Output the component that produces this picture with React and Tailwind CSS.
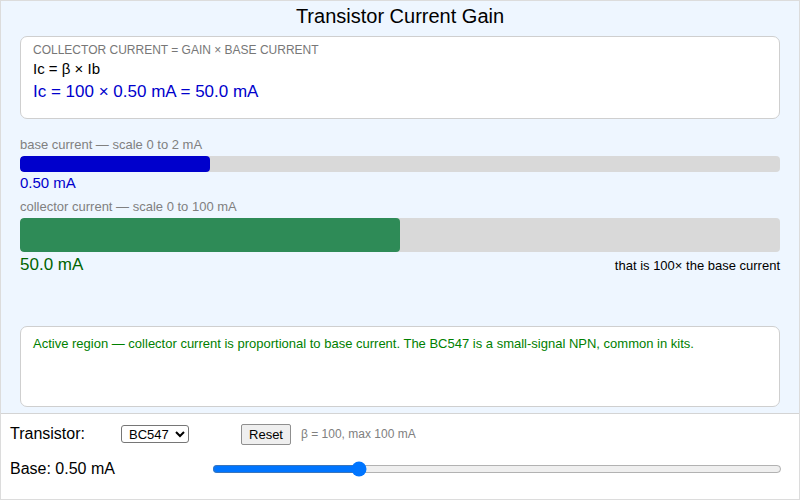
import React, { useState } from 'react';

const transistors = {
    BC547: { beta: 100, max: 100, note: 'The BC547 is a small-signal NPN, common in kits.' },
    '2N2222': { beta: 150, max: 600, note: 'The 2N2222 is a general-purpose NPN switch.' },
};

const App = () => {
    const [part, setPart] = useState('BC547');
    const [base, setBase] = useState(0.5);
    const t = transistors[part];
    const collector = Math.min(t.beta * base, t.max);

    return (
        <div className="w-[800px] h-[500px] border border-[#dcdcdc] flex flex-col font-['Liberation_Sans',Arial,sans-serif] text-black">
            <div className="h-[413px] bg-[#eef6ff] px-[19px] pt-[3px] border-b border-[#d4d4d4]">
                <h1 className="text-[20px] leading-6 text-center">Transistor Current Gain</h1>

                <div className="mt-[8px] h-[83px] bg-white border border-[#cfcfcf] rounded-[7px] px-3 pt-[5px]">
                    <div className="text-[12px] leading-4 text-[#777]">COLLECTOR CURRENT = GAIN × BASE CURRENT</div>
                    <div className="text-[15px] leading-[20px] mt-[1px]">Ic = β × Ib</div>
                    <div className="text-[17px] leading-6 text-[#0000cc] mt-[1px]">
                        Ic = {t.beta} × {base.toFixed(2)} mA = {collector.toFixed(1)} mA
                    </div>
                </div>

                <div className="mt-[18px] text-[13px] leading-4 text-[#808080]">base current — scale 0 to 2 mA</div>
                <div className="mt-[3px] h-4 bg-[#d9d9d9] rounded-[4px] overflow-hidden">
                    <div className="h-full bg-[#0000cc] rounded-[4px]" style={{ width: `${(base / 2) * 100}%` }} />
                </div>
                <div className="text-[15px] leading-[20px] text-[#0000cc] mt-[1px]">{base.toFixed(2)} mA</div>

                <div className="mt-[6px] text-[13px] leading-4 text-[#808080]">collector current — scale 0 to 100 mA</div>
                <div className="mt-[3px] h-[34px] bg-[#d9d9d9] rounded-[4px] overflow-hidden">
                    <div className="h-full bg-[#2e8b57] rounded-[4px]" style={{ width: `${Math.min(collector, 100)}%` }} />
                </div>
                <div className="flex items-baseline justify-between mt-[1px]">
                    <span className="text-[17px] leading-6 text-[#006400]">{collector.toFixed(1)} mA</span>
                    <span className="text-[13px]">that is {t.beta}× the base current</span>
                </div>

                <div className="mt-[49px] h-[81px] bg-white border border-[#cfcfcf] rounded-[7px] px-3 pt-[9px] text-[13px] leading-4 text-[#008000]">
                    Active region — collector current is proportional to base current. {t.note}
                </div>
            </div>

            <div className="flex-1 bg-white px-[9px]">
                <div className="flex items-center h-[37px] pt-[3px]">
                    <span className="w-[111px] text-[16px]">Transistor:</span>
                    <select
                        value={part}
                        onChange={(e) => setPart(e.target.value)}
                        className="w-[68px] h-[18px] text-[13px] leading-4 border border-[#767676] rounded-[3px] bg-white pl-[3px]"
                    >
                        <option>BC547</option>
                        <option>2N2222</option>
                    </select>
                    <button
                        onClick={() => { setPart('BC547'); setBase(0.5); }}
                        className="ml-[52px] w-[50px] h-[21px] text-[13px] bg-[#efefef] border border-[#8f8f8f] rounded-[2px]"
                    >
                        Reset
                    </button>
                    <span className="ml-[10px] text-[12px] text-[#808080]">β = {t.beta}, max {t.max} mA</span>
                </div>
                <div className="flex items-center h-[36px]">
                    <span className="w-[202px] text-[16px]">Base: {base.toFixed(2)} mA</span>
                    <input
                        type="range"
                        min="0"
                        max="2"
                        step="0.01"
                        value={base}
                        onChange={(e) => setBase(parseFloat(e.target.value))}
                        className="w-[570px]"
                    />
                </div>
            </div>
        </div>
    );
};

export default App;
